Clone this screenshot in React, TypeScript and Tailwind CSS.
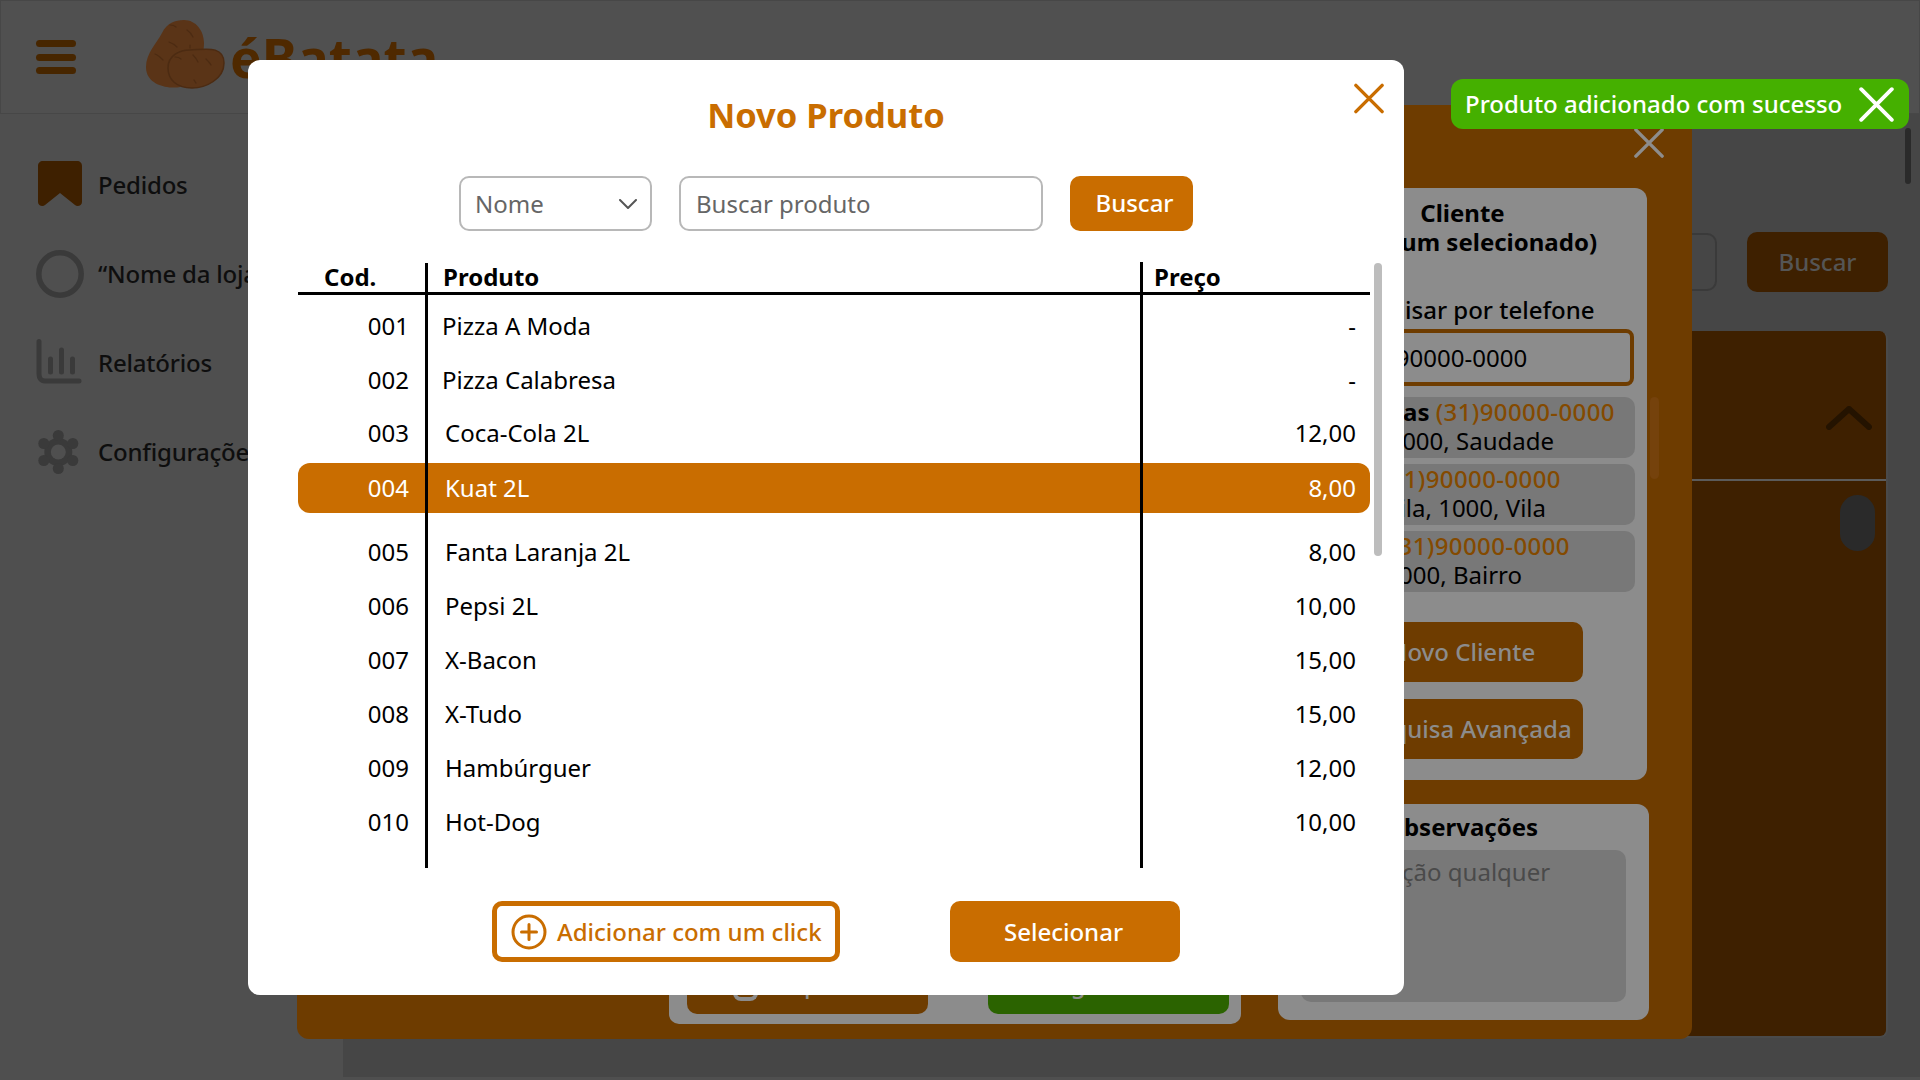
import React from "react";

const orange = "bg-[#c96d00]";

function XIcon({ cls, w }: { cls: string; w: number }) {
  return (
    <svg viewBox="0 0 32 32" className={cls} fill="none" stroke="currentColor" strokeWidth={w} strokeLinecap="round">
      <path d="M2 2 L30 30 M30 2 L2 30" />
    </svg>
  );
}

function Potato() {
  return (
    <svg viewBox="0 0 120 100" className="w-[120px] h-[100px]" fill="none">
      <path d="M16 60C16 46 27 36 32 26C37 16 45 13 54 13C66 13 74 24 74 36C74 52 64 72 50 80C42 82 16 80 16 60Z" fill="#5a3417" />
      <path d="M38 61C38 48 50 43 60 43C72 43 94 37 94 56C94 72 76 81 62 81C47 81 38 73 38 61Z" fill="#5a3417" stroke="#4c2b12" strokeWidth="1.500" />
      <path d="M40 18C43 18 45 19 46 20M57 23C60 25 62 28 63 30M39 35C42 36 45 38 47 40M60 38C60 39 60 40 60 41M25 47C28 48 31 51 33 53M45 50C48 50 50 51 51 52M63 48C65 50 67 53 68 55M76 52C78 54 80 56 81 58M64 73C65 74 65 75 66 76" stroke="#4c2b12" strokeWidth="1.200" strokeLinecap="round" />
    </svg>
  );
}

const sideItems = [
  { label: "Pedidos", icon: "book" },
  { label: "“Nome da loja”", icon: "circle" },
  { label: "Relatórios", icon: "chart" },
  { label: "Configurações", icon: "gear" },
];

function SideIcon({ kind }: { kind: string }) {
  if (kind === "book")
    return (
      <svg viewBox="0 0 48 48" className="w-12 h-12 -translate-y-px" fill="#3e2000">
        <path d="M2 6C2 3 4 1 7 1H41C44 1 46 3 46 6V42C46 46 41 47 39 45L24 33L9 45C7 47 2 46 2 42Z" />
      </svg>
    );
  if (kind === "circle")
    return (
      <svg viewBox="0 0 48 48" className="w-12 h-12" fill="none" stroke="#3a3a3a" strokeWidth="5.500">
        <circle cx="24" cy="24" r="21.200" />
      </svg>
    );
  if (kind === "chart")
    return (
      <svg viewBox="0 0 48 48" className="w-12 h-12" fill="none" stroke="#3a3a3a" strokeWidth="5" strokeLinecap="round">
        <path d="M3 2.500V35C3 39 5 42 9 42H43" />
        <path d="M14.500 20V33M25.500 11V33M36.500 20V33" />
      </svg>
    );
  return (
    <svg viewBox="0 0 48 48" className="w-12 h-12" fill="#3a3a3a">
      <circle cx="22.300" cy="24" r="14" />
      <circle cx="22.300" cy="7.500" r="5.500" />
      <circle cx="22.300" cy="40.500" r="5.500" />
      <circle cx="7.800" cy="15.500" r="5.500" />
      <circle cx="36.800" cy="15.500" r="5.500" />
      <circle cx="7.800" cy="32.500" r="5.500" />
      <circle cx="36.800" cy="32.500" r="5.500" />
      <circle cx="22.300" cy="24" r="7.500" fill="#4f4f4f" />
    </svg>
  );
}

const rows = [
  { c: "001", n: "Pizza A Moda", p: "-", mt: "mt-[6px]", nm: "ml-[33px]" },
  { c: "002", n: "Pizza Calabresa", p: "-", mt: "mt-[4px]", nm: "ml-[33px]" },
  { c: "003", n: "Coca-Cola 2L", p: "12,00", mt: "mt-[3px]", nm: "ml-[36px]" },
  { c: "004", n: "Kuat 2L", p: "8,00", mt: "mt-[5px]", nm: "ml-[36px]", sel: true },
  { c: "005", n: "Fanta Laranja 2L", p: "8,00", mt: "mt-[14px]", nm: "ml-[36px]" },
  { c: "006", n: "Pepsi 2L", p: "10,00", mt: "mt-[4px]", nm: "ml-[36px]" },
  { c: "007", n: "X-Bacon", p: "15,00", mt: "mt-[4px]", nm: "ml-[36px]" },
  { c: "008", n: "X-Tudo", p: "15,00", mt: "mt-[4px]", nm: "ml-[36px]" },
  { c: "009", n: "Hambúrguer", p: "12,00", mt: "mt-[4px]", nm: "ml-[36px]" },
  { c: "010", n: "Hot-Dog", p: "10,00", mt: "mt-[4px]", nm: "ml-[36px]" },
];

const clients = [
  { a: "Nome Dias ", t: "(31)90000-0000", b: "Rua Dias, 1000, Saudade", ra: "pr-[20px]", rb: "pr-[81px]", mt: "mt-[11px]" },
  { a: "Nome ", t: "(31)90000-0000", b: "Rua Vila, 1000, Vila", ra: "pr-[74px]", rb: "pr-[89px]", mt: "mt-[6px]" },
  { a: "Nome ", t: "(31)90000-0000", b: "Rua X, 1000, Bairro", ra: "pr-[65px]", rb: "pr-[113px]", mt: "mt-[6px]" },
];

export default function App() {
  return (
    <div className="relative w-[1920px] h-[1080px] overflow-hidden bg-[#4f4f4f] font-['Noto_Sans','DejaVu_Sans',sans-serif] text-[24px] text-black">
      {/* Page */}
      <header className="h-[114px] flex items-center border border-[#474747] bg-[#505050]">
        <div className="ml-[35px] w-[40px] flex flex-col gap-[6.500px]">
          <span className="block h-[7px] rounded-full bg-[#472600]" />
          <span className="block h-[7px] rounded-full bg-[#472600]" />
          <span className="block h-[7px] rounded-full bg-[#472600]" />
        </div>
        <div className="ml-[54px] flex items-center">
          <Potato />
          <span className="-ml-[20px] text-[53px] font-bold leading-none text-[#4f2900]">éBatata</span>
        </div>
      </header>
      <div className="flex h-[963px]">
        <aside className="w-[343px] shrink-0 pt-[26px]">
          {sideItems.map((s) => (
            <div key={s.label} className="h-[89px] flex items-center pl-[36px] whitespace-nowrap">
              <SideIcon kind={s.icon} />
              <span className="ml-[14px] font-medium text-[#0e0e0e] tracking-[-0.2px]">{s.label}</span>
            </div>
          ))}
        </aside>
        <main className="flex-1 bg-[#464646] pt-[118px] pr-[32px] pl-[40px]">
          <div className="flex justify-end gap-[30px]">
            <div className="w-[500px] h-[58px] mt-[1px] rounded-[10px] border-2 border-[#3a3a3a]" />
            <button className="w-[141px] h-[60px] rounded-[10px] bg-[#3e2000] font-medium text-[#555555]">Buscar</button>
          </div>
          <section className="mt-[39px] h-[707px] rounded-[8px] bg-[#3e2000] border-r-2 border-b-2 border-[#4a4a4a]">
            <div className="h-[150px] border-b-2 border-[#5b5b5b] flex justify-end pt-[75px] pr-[14px]">
              <svg viewBox="0 0 46 24" className="w-[46px] h-[24px]" fill="none" stroke="#241300" strokeWidth="6" strokeLinecap="round" strokeLinejoin="round">
                <path d="M3 21L23 3L43 21" />
              </svg>
            </div>
            <div className="flex justify-end pr-[11px] mt-[14px]">
              <div className="w-[35px] h-[56px] rounded-full bg-[#2a2a2a]" />
            </div>
          </section>
        </main>
      </div>
      <div className="absolute right-[9px] top-[128px] w-[6px] h-[56px] rounded-full bg-[#2a2a2a]" />

      {/* Order modal (behind) */}
      <div className="absolute left-[297px] top-[105px] w-[1395px] h-[934px] rounded-[12px] bg-[#6e3c00] flex pl-[372px]">
        <div className="w-[572px] shrink-0 self-end mb-[15px] h-[80px] rounded-[10px] bg-[#8c8c8c] pl-[18px] pb-[10px] flex items-end gap-[60px]">
          <button className="w-[241px] h-[60px] shrink-0 rounded-[10px] bg-[#6e3c00] text-[#8c8c8c] flex items-center pl-[46px] gap-[4px] font-medium">
            <span className="block w-[25px] h-[34px] rounded-b-[8px] border-4 border-t-0 border-[#8c8c8c]" />
            <span>Limpar</span>
          </button>
          <button className="w-[241px] h-[60px] shrink-0 rounded-[10px] bg-[#2b6300] text-[#8c8c8c] flex items-center justify-center font-medium">Pagamento</button>
        </div>
        <div className="ml-[37px] w-[371px] shrink-0 pt-[83px] relative">
          <div className="w-[369px] h-[592px] rounded-[12px] bg-[#8c8c8c] pt-[10px] flex flex-col">
            <div className="text-center font-bold leading-[29px]">
              Cliente
              <br />
              (Nenhum selecionado)
            </div>
            <div className="mt-[39px] leading-[29px] font-medium pl-[57px] whitespace-nowrap">Pesquisar por telefone</div>
            <div className="mt-[5px] ml-[13px] w-[343px] h-[57px] rounded-[8px] border-[4px] border-[#6e3c00] flex items-center pl-[59px]">(31)90000-0000</div>
            {clients.map((c) => (
              <div key={c.b} className={`${c.mt} ml-[13px] w-[344px] h-[61px] pb-[3px] rounded-[10px] bg-[#787878] flex flex-col items-end justify-center leading-[29px] whitespace-nowrap`}>
                <div className={c.ra}>
                  <span className="font-bold">{c.a}</span>
                  <span className="text-[#844a00] font-medium tracking-[0.4px]">{c.t}</span>
                </div>
                <div className={c.rb}>{c.b}</div>
              </div>
            ))}
            <button className="mt-[30px] ml-[63px] w-[242px] h-[60px] rounded-[10px] bg-[#6e3c00] text-[#8c8c8c] font-medium">Novo Cliente</button>
            <button className="mt-[17px] ml-[63px] w-[242px] h-[60px] rounded-[10px] bg-[#6e3c00] text-[#8c8c8c] font-medium whitespace-nowrap">Pesquisa Avançada</button>
          </div>
          <div className="mt-[24px] h-[216px] rounded-[12px] bg-[#8c8c8c] pt-[8px] px-[23px]">
            <div className="font-bold text-center leading-[29px] pr-[4px]">Observações</div>
            <div className="mt-[9px] h-[152px] rounded-[10px] bg-[#787878] pl-[7px] pt-[4px] text-[#4a4a4a] whitespace-nowrap">Observação qualquer</div>
          </div>
          <div className="absolute left-[372px] top-[292px] w-[9px] h-[82px] rounded-full bg-[#75420c]" />
        </div>
        <XIcon cls="absolute right-[28px] top-[23px] w-[30px] h-[30px] text-[#8d8d8d]" w={3.600} />
      </div>

      {/* Product modal (front) */}
      <div className="absolute left-[248px] top-[60px] w-[1156px] h-[935px] rounded-[12px] bg-white pt-[32px]">
        <XIcon cls="absolute right-[20px] top-[23px] w-[30px] h-[31px] text-[#c96d00]" w={3.600} />
        <h2 className="text-center text-[34.500px] leading-[46px] font-bold text-[#c96d00]">Novo Produto</h2>
        <div className="mt-[38px] flex justify-center gap-[27px] h-[55px]">
          <div className="w-[193px] rounded-[10px] border-2 border-[#b8b8b8] flex items-center justify-between pl-[14px] pr-[13px] text-[#666666]">
            <span>Nome</span>
            <svg viewBox="0 0 18 10" className="w-[18px] h-[10px]" fill="none" stroke="#555555" strokeWidth="2" strokeLinecap="round" strokeLinejoin="round">
              <path d="M1 1L9 9L17 1" />
            </svg>
          </div>
          <input
            readOnly
            placeholder="Buscar produto"
            className="w-[364px] rounded-[10px] border-2 border-[#b8b8b8] pl-[15px] outline-none placeholder:text-[#666666]"
          />
          <button className={`w-[123px] rounded-[10px] ${orange} text-white font-medium pl-[6px] pb-[2px]`}>Buscar</button>
        </div>

        <div className="relative mt-[32px] ml-[50px] w-[1072px] h-[605px]">
          <div className="h-[29px] border-b-[3px] border-black flex font-bold leading-[27px] box-content">
            <div className="w-[145px] pl-[26px]">Cod.</div>
            <div className="w-[711px]">Produto</div>
            <div>Preço</div>
          </div>
          {rows.map((r) => (
            <div
              key={r.c}
              className={`${r.mt} h-[50px] flex items-center rounded-[12px] ${r.sel ? `${orange} text-white` : ""}`}
            >
              <div className="w-[111px] text-right">{r.c}</div>
              <div className={`${r.nm} flex-1`}>{r.n}</div>
              <div className="pr-[14px]">{r.p}</div>
            </div>
          ))}
          <div className="absolute left-[127px] top-0 bottom-0 w-[3px] bg-black" />
          <div className="absolute left-[842px] -top-[1px] bottom-0 w-[3px] bg-black" />
        </div>
        <div className="absolute left-[1126px] top-[203px] w-[8px] h-[293px] rounded-full bg-[#bdbdbd]" />

        <div className="mt-[33px] pl-[244px] flex gap-[110px] h-[61px]">
          <button className="w-[348px] rounded-[10px] border-[5px] border-[#c96d00] text-[#c96d00] font-medium flex items-center pl-[14px] gap-[10px] whitespace-nowrap">
            <svg viewBox="0 0 36 36" className="w-[36px] h-[36px]" fill="none" stroke="currentColor" strokeWidth="3" strokeLinecap="round">
              <circle cx="18" cy="18" r="16" />
              <path d="M10.500 18H25.500M18 10.500V25.500" />
            </svg>
            Adicionar com um click
          </button>
          <button className={`w-[230px] rounded-[10px] ${orange} text-white font-medium pr-[3px]`}>Selecionar</button>
        </div>
      </div>

      {/* Toast */}
      <div className="absolute left-[1451px] top-[79px] w-[458px] h-[50px] rounded-[12px] bg-[#45b000] flex items-center justify-between pl-[14px] pr-[15px] text-white text-[24px] font-medium whitespace-nowrap">
        <span>Produto adicionado com sucesso</span>
        <XIcon cls="w-[35px] h-[35px] text-white" w={3.500} />
      </div>
    </div>
  );
}
